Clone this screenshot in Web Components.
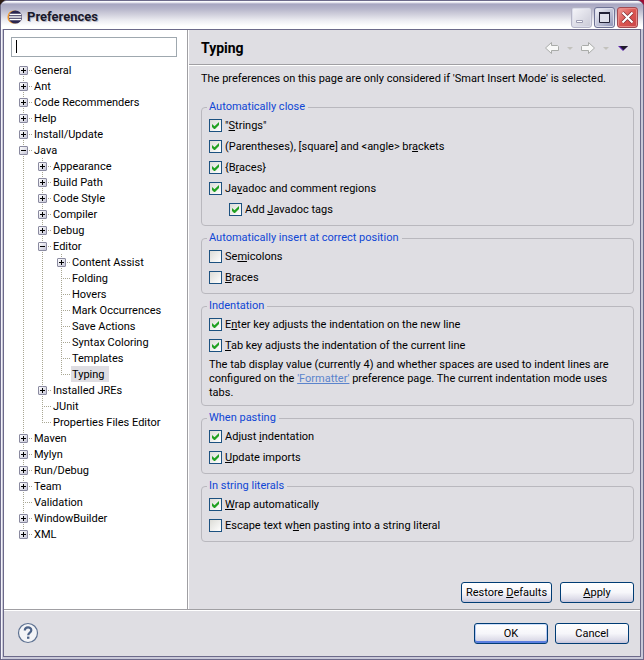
<!DOCTYPE html>
<html lang="en">
<head>
<meta charset="utf-8">
<title>Preferences</title>
<style>
  html { height: 100%; background: linear-gradient(90deg, #2b1a12 0 50%, #9c0c34 50%); }
  body { margin: 0; min-height: 100%; display: flex; font: 11px/14px Roboto, "Liberation Sans", sans-serif; color: #000; cursor: default;
    --face: #dfdee3; --edge: #6c6a8a; --rule: #a09fa3; --group: #b9b8be; --navy: #123c6e; }
  pref-window { flex: 1; }
  u { text-underline-offset: 1px; }
  a { color: #5b84cc; }
  p { margin: 0; }
  p.note { line-height: 14px; margin: 2px 0 0; }
  .buttons { display: flex; justify-content: flex-end; gap: 8px; margin-top: auto; }
</style>
</head>
<body>
<pref-window caption="Preferences">
  <pref-sidebar slot="side">
    <tree-item label="General" closed></tree-item>
    <tree-item label="Ant" closed></tree-item>
    <tree-item label="Code Recommenders" closed></tree-item>
    <tree-item label="Help" closed></tree-item>
    <tree-item label="Install/Update" closed></tree-item>
    <tree-item label="Java" open>
      <tree-item label="Appearance" closed></tree-item>
      <tree-item label="Build Path" closed></tree-item>
      <tree-item label="Code Style" closed></tree-item>
      <tree-item label="Compiler" closed></tree-item>
      <tree-item label="Debug" closed></tree-item>
      <tree-item label="Editor" open>
        <tree-item label="Content Assist" closed></tree-item>
        <tree-item label="Folding"></tree-item>
        <tree-item label="Hovers"></tree-item>
        <tree-item label="Mark Occurrences"></tree-item>
        <tree-item label="Save Actions"></tree-item>
        <tree-item label="Syntax Coloring"></tree-item>
        <tree-item label="Templates"></tree-item>
        <tree-item label="Typing" selected></tree-item>
      </tree-item>
      <tree-item label="Installed JREs" closed></tree-item>
      <tree-item label="JUnit"></tree-item>
      <tree-item label="Properties Files Editor"></tree-item>
    </tree-item>
    <tree-item label="Maven" closed></tree-item>
    <tree-item label="Mylyn" closed></tree-item>
    <tree-item label="Run/Debug" closed></tree-item>
    <tree-item label="Team" closed></tree-item>
    <tree-item label="Validation"></tree-item>
    <tree-item label="WindowBuilder" closed></tree-item>
    <tree-item label="XML" closed></tree-item>
  </pref-sidebar>

  <pref-page heading="Typing">
    <p>The preferences on this page are only considered if 'Smart Insert Mode' is selected.</p>
    <div slot="groups">
      <pref-group label="Automatically close">
        <pref-check checked>"<u>S</u>trings"</pref-check>
        <pref-check checked>(Parentheses), [square] and &lt;angle&gt; br<u>a</u>ckets</pref-check>
        <pref-check checked>{B<u>r</u>aces}</pref-check>
        <pref-check checked>Ja<u>v</u>adoc and comment regions</pref-check>
        <pref-check checked nested>Add <u>J</u>avadoc tags</pref-check>
      </pref-group>
      <pref-group label="Automatically insert at correct position">
        <pref-check>Se<u>m</u>icolons</pref-check>
        <pref-check><u>B</u>races</pref-check>
      </pref-group>
      <pref-group label="Indentation">
        <pref-check checked>E<u>n</u>ter key adjusts the indentation on the new line</pref-check>
        <pref-check checked><u>T</u>ab key adjusts the indentation of the current line</pref-check>
        <p class="note">The tab display value (currently 4) and whether spaces are used to indent lines are configured on the <a href="#formatter">'Formatter'</a> preference page. The current indentation mode uses tabs.</p>
      </pref-group>
      <pref-group label="When pasting">
        <pref-check checked>Adjust <u>i</u>ndentation</pref-check>
        <pref-check checked><u>U</u>pdate imports</pref-check>
      </pref-group>
      <pref-group label="In string literals">
        <pref-check checked><u>W</u>rap automatically</pref-check>
        <pref-check>Escape text w<u>h</u>en pasting into a string literal</pref-check>
      </pref-group>
    </div>
    <div class="buttons" slot="actions">
      <push-button wide>Restore <u>D</u>efaults</push-button>
      <push-button><u>A</u>pply</push-button>
    </div>
  </pref-page>

  <pref-footer slot="footer">
    <push-button default>OK</push-button>
    <push-button>Cancel</push-button>
  </pref-footer>
</pref-window>

<script>
class Base extends HTMLElement {
  attr(name) { return this.getAttribute(name) || ''; }
  connectedCallback() {
    if (this.shadowRoot) return;
    this.attachShadow({ mode: 'open' }).innerHTML = this.render();
  }
}

customElements.define('pref-window', class extends Base {
  render() { return `
    <style>
      :host { display: flex; box-sizing: border-box; border: 1px solid var(--edge); border-radius: 7px 7px 0 0; background: #c9c8d8; overflow: hidden;
        box-shadow: inset 1px 1px #f4f4fa; flex-direction: column; padding: 0 2px 2px; }
      header { display: flex; align-items: center; box-sizing: border-box; height: 28px; margin: 0 -2px; padding: 4px 5px 0 6px;
        background: linear-gradient(#fafafd 0 1px, #a7a6c1 3px, #b7b6cb 8px, #d3d2de 14px, #efeff4 20px, #fff 25px); }
      h1 { flex: 1; margin: 0 0 0 4px; font: bold 13px/18px Roboto, sans-serif; color: #19192b; text-shadow: 1px 1px #b9b8c8; }
      .controls { display: flex; gap: 2px; }
      button { width: 21px; height: 21px; padding: 0; box-sizing: border-box; border: 1px solid #6f7396; border-radius: 3px;
        background: linear-gradient(135deg, #f5f5fa, #b9bcd3 60%, #8b90b6); box-shadow: inset 0 0 0 1px #dcddea; }
      button.min { border-color: #b5b5c6; background: linear-gradient(135deg, #f6f6fa, #c9c9d6); }
      button.close { border-color: #a24a52; background: linear-gradient(135deg, #ef9c98, #dc5550 50%, #c94549); box-shadow: inset 0 0 0 1px #e88a86; }
      button svg { display: block; }
      .frame { flex: 1; display: grid; grid-template: 1fr auto / minmax(0, 184fr) minmax(0, 452fr); border: 1px solid var(--edge); background: var(--face); }
      .side { display: flex; background: #fff; border-right: 1px solid var(--rule); }
      .page { display: flex; border-left: 1px solid #fff; }
      .side > ::slotted(*), .page > ::slotted(*) { flex: 1; min-width: 0; }
      .foot { grid-column: 1 / 3; border-top: 1px solid var(--rule); box-shadow: inset 0 1px #fff; }
    </style>
    <header>
      <svg width="16" height="16" viewBox="0 0 16 16" aria-hidden="true">
        <circle cx="7" cy="8" r="6.6" fill="#f29a2e"/><circle cx="8.4" cy="8" r="6.6" fill="#2c2650"/>
        <path d="M2.500 5.500h11.500M2 8h12.500M2.500 10.500h11.500" stroke="#fff" stroke-width="1.3"/>
      </svg>
      <h1>${this.attr('caption')}</h1>
      <div class="controls">
        <button class="min" aria-label="Minimize"><svg width="19" height="19"><path d="M4.500 12.500h6v2h-6z" fill="#fff" stroke="#9c9cb2"/></svg></button>
        <button aria-label="Maximize"><svg width="19" height="19"><path d="M4.500 5v9.500h10v-9.500z" fill="#dfe0ec" stroke="#222238"/><path d="M4 5h11" stroke="#222238" stroke-width="2"/></svg></button>
        <button class="close" aria-label="Close"><svg width="19" height="19"><path d="M4.500 4.500l10 10M14.500 4.500l-10 10" stroke="#7a2a30" stroke-width="3.400"/><path d="M4.500 4.500l10 10M14.500 4.500l-10 10" stroke="#fff" stroke-width="2.200"/></svg></button>
      </div>
    </header>
    <div class="frame">
      <div class="side"><slot name="side"></slot></div>
      <div class="page"><slot></slot></div>
      <div class="foot"><slot name="footer"></slot></div>
    </div>`; }
});

customElements.define('pref-sidebar', class extends Base {
  render() { return `
    <style>
      :host { display: block; padding: 7px 10px 7px 7px; }
      input { display: block; box-sizing: border-box; width: 100%; height: 20px; margin: 0 0 5px; border: 1px solid #9fa8af; padding: 0 4px; font: inherit; outline: 0;
        background: linear-gradient(#000, #000) 4px 2px / 1px 13px no-repeat #fff; caret-color: transparent; }
      nav { padding-left: 8px; }
    </style>
    <input type="text" aria-label="Filter">
    <nav><slot></slot></nav>`; }
});

customElements.define('tree-item', class extends Base {
  render() {
    const branch = this.hasAttribute('open') || this.hasAttribute('closed');
    return `
    <style>
      :host { display: block; background: repeating-linear-gradient(#a9a793 0 1px, transparent 1px 2px) 4px 0 / 1px 100% no-repeat; }
      :host(:last-child) { background-size: 1px 8px; }
      :host([label="General"]) { background-position: 4px 8px; }
      .row { display: grid; grid-template-columns: 9px 5px max-content; align-items: center; height: 16px; }
      .twist { display: block; box-sizing: border-box; width: 9px; height: 9px; padding: 0; border: 1px solid #8a8aa0; border-radius: 1px;
        background: linear-gradient(#000, #000) 1px 3px / 5px 1px no-repeat, linear-gradient(135deg, #fff, #c6c6d6); }
      :host([closed]) .twist { background: linear-gradient(#000, #000) 1px 3px / 5px 1px no-repeat, linear-gradient(#000, #000) 3px 1px / 1px 5px no-repeat, linear-gradient(135deg, #fff, #c6c6d6); }
      .dots { grid-column: 2; height: 1px; margin-right: 1px; background: repeating-linear-gradient(90deg, transparent 0 1px, #a9a793 1px 2px); }
      .leaf .dots { grid-column: 1 / 3; margin-left: 4px; background: repeating-linear-gradient(90deg, #a9a793 0 1px, transparent 1px 2px); }
      .label { line-height: 14px; padding: 2px 5px 0 1px; }
      :host([selected]) .label { background: var(--face); }
      .kids { padding-left: 19px; }
    </style>
    <div class="row ${branch ? '' : 'leaf'}">
      ${branch ? '<button class="twist" aria-label="Toggle"></button>' : ''}<span class="dots"></span><span class="label">${this.attr('label')}</span>
    </div>
    <div class="kids"><slot></slot></div>`; }
});

customElements.define('pref-page', class extends Base {
  render() { return `
    <style>
      :host { display: flex; flex-direction: column; }
      header { display: flex; align-items: center; height: 34px; padding: 0 12px; border-bottom: 1px solid var(--rule); box-shadow: 0 1px #fff; }
      h2 { flex: 1; margin: 0; padding-top: 2px; font: bold 14px/18px Roboto, sans-serif; }
      nav { display: flex; align-items: center; gap: 6px; padding-top: 2px; }
      button { display: block; border: 0; padding: 0; background: none; }
      svg { display: block; }
      .menu { margin-left: 2px; }
      .body { flex: 1; display: flex; flex-direction: column; gap: 14px; padding: 7px 6px 6px 12px; }
    </style>
    <header>
      <h2>${this.attr('heading')}</h2>
      <nav>
        <button aria-label="Back"><svg width="16" height="14"><path d="M1.500 7L7.500 1.500V4.500H13.500L14.500 5.500V9.500H7.500V12.500Z" fill="#f8f8f8" stroke="#a9aba9"/></svg></button>
        <button aria-label="Back history"><svg width="8" height="14"><path d="M1 6h6l-3 3z" fill="#c3c2bd"/></svg></button>
        <button aria-label="Forward"><svg width="16" height="14"><path d="M14.500 7L8.500 1.500V4.500H2.500L1.500 5.500V9.500H8.500V12.500Z" fill="#f8f8f8" stroke="#a9aba9"/></svg></button>
        <button aria-label="Forward history"><svg width="8" height="14"><path d="M1 6h6l-3 3z" fill="#c3c2bd"/></svg></button>
        <button class="menu" aria-label="Menu"><svg width="10" height="14"><path d="M0 5h10L5 10z" fill="#5a22a8"/><path d="M2 5h8L5.500 9z" fill="#1e1a28"/></svg></button>
      </nav>
    </header>
    <div class="body"><slot></slot><slot name="groups"></slot><slot name="actions"></slot></div>`; }
});

customElements.define('pref-group', class extends Base {
  render() { return `
    <style>
      :host { display: block; margin-bottom: 5px; }
      fieldset { margin: 0; min-width: 0; border: 1px solid var(--group); border-radius: 4px; padding: 1px 2px 5px 7px; }
      legend { margin-left: -2px; padding: 0 3px 0 2px; line-height: 14px; color: #0f46d5; }
    </style>
    <fieldset><legend>${this.attr('label')}</legend><slot></slot></fieldset>`; }
});

customElements.define('pref-check', class extends Base {
  render() { return `
    <style>
      :host { display: block; }
      :host([nested]) { padding-left: 20px; }
      label { display: grid; grid-template-columns: 13px auto; justify-content: start; align-items: center; column-gap: 3px; height: 21px; }
      input { appearance: none; box-sizing: border-box; grid-area: 1 / 1; width: 13px; height: 13px; margin: 0; border: 1px solid #1c5180; background: linear-gradient(135deg, #dcdcd7, #fff); }
      svg { grid-area: 1 / 1; display: none; pointer-events: none; }
      input:checked + svg { display: block; }
      span { padding-top: 1px; }
    </style>
    <label><input type="checkbox" ${this.hasAttribute('checked') ? 'checked' : ''}><svg width="13" height="13" viewBox="0 0 13 13"><path d="M3 5v3l2 2h1l4-4V3L5.500 7.300z" fill="#21a121"/></svg><span><slot></slot></span></label>`; }
});

customElements.define('push-button', class extends Base {
  render() { return `
    <style>
      :host { display: block; }
      button { display: block; box-sizing: border-box; width: 74px; height: 21px; padding: 1px 0 0; border: 1px solid #003c74; border-radius: 3px; font: inherit; line-height: 14px; color: #000; white-space: nowrap;
        background: linear-gradient(#fff, #f6f6fa 50%, #dcdbe8 85%, #c4c3da); }
      :host([wide]) button { width: 91px; }
      :host([default]) button { box-shadow: inset 0 -2px #5b7fe0, inset 0 1px #cee0fc, inset 1px 0 #b4c8f4, inset -1px 0 #b4c8f4; }
    </style>
    <button type="button"><slot></slot></button>`; }
});

customElements.define('pref-footer', class extends Base {
  render() { return `
    <style>
      :host { display: flex; align-items: center; gap: 7px; padding: 12px 11px 12px 13px; }
      .help { display: block; margin-right: auto; padding: 0; border: 0; background: none; }
      svg { display: block; }
    </style>
    <button class="help" aria-label="Help"><svg width="22" height="22" viewBox="0 0 22 22">
      <circle cx="11" cy="11" r="9.500" fill="#f3f4f7" stroke="#5d7191" stroke-width="1.200"/>
      <path d="M7.800 8.600C7.800 4.300 14.300 4.300 14.300 8.300C14.300 10.700 11.200 10.600 11.200 13.300" fill="none" stroke="#4d6388" stroke-width="2.200"/>
      <path d="M10 14.600h2.400v2.200H10z" fill="#4d6388"/></svg></button>
    <slot></slot>`; }
});
</script>
</body>
</html>
